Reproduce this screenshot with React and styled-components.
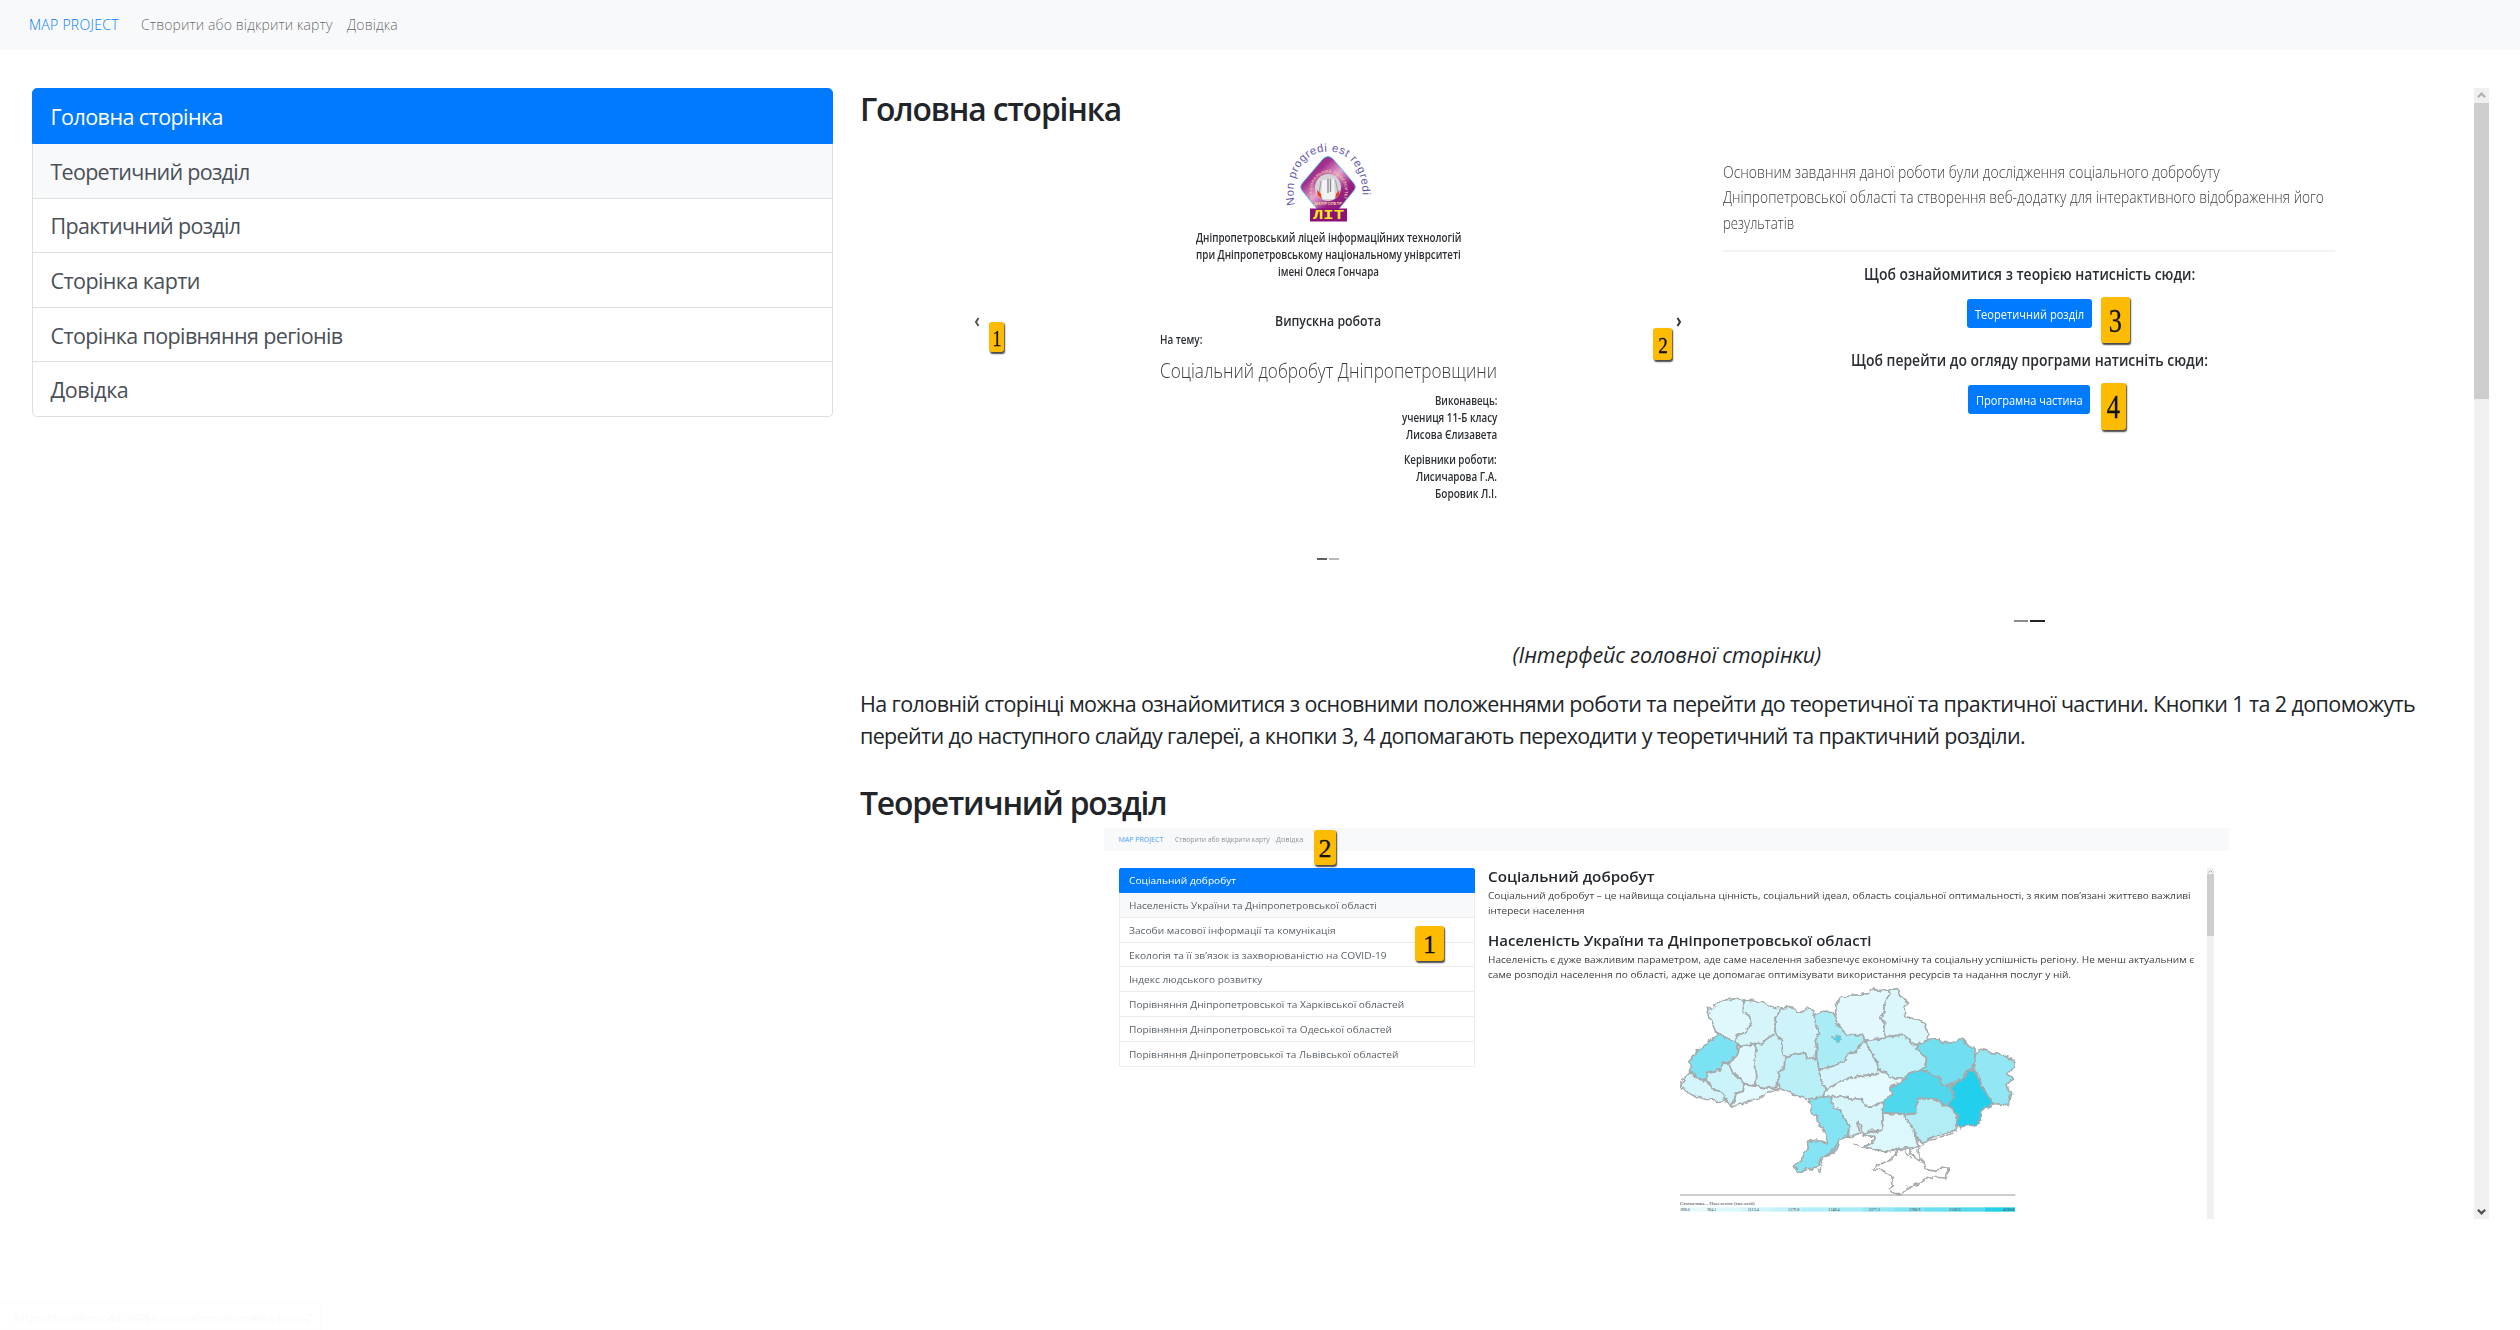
import React, { useLayoutEffect, useRef, useState } from "react";
import styled, { createGlobalStyle } from "styled-components";

const Global = createGlobalStyle`
  * { box-sizing: border-box; }
  html, body { margin: 0; padding: 0; background: #fff; overflow: hidden; }
  body { font-family: "Open Sans", "Noto Sans", sans-serif; color: #212529; }
  h2, h4, p, ul, figure { margin: 0; padding: 0; font-weight: inherit; }
`;

/* ---------- single line of text set to a given measure ---------- */

const LineBox = styled.span`
  display: block;
  flex: none;
  width: ${(p) => p.$w}px;
  height: ${(p) => p.$lh}px;
  line-height: ${(p) => p.$lh}px;
  font-size: ${(p) => p.$size}px;
  font-weight: ${(p) => p.$weight || 400};
  font-style: ${(p) => (p.$italic ? "italic" : "normal")};
  ${(p) => (p.$color ? `color: ${p.$color};` : "")}
  white-space: nowrap;
`;

const LineInk = styled.span`
  display: inline-block;
  transform-origin: 0 50%;
`;

function Line({ w, lh, size, weight, color, italic, stretch, children }) {
  const ink = useRef(null);
  const [fit, setFit] = useState(null);
  useLayoutEffect(() => {
    const natural = ink.current.offsetWidth;
    setFit(
      stretch
        ? { transform: `scaleX(${w / natural})` }
        : { letterSpacing: `${(w - natural) / children.length}px` }
    );
  }, []);
  return (
    <LineBox $w={w} $lh={lh} $size={size} $weight={weight} $color={color} $italic={italic}>
      <LineInk ref={ink} style={fit || undefined}>{children}</LineInk>
    </LineBox>
  );
}

/* ---------- page frame ---------- */

const Page = styled.div`
  width: 2520px;
  height: 1330px;
  display: flex;
  flex-direction: column;
  overflow: hidden;
  position: relative;
`;

const Navbar = styled.nav`
  flex: none;
  height: 50px;
  padding-left: 29px;
  display: flex;
  align-items: center;
  background: #f8f9fa;
`;

const Brand = styled.div`
  color: #007bff;
  margin-right: 22px;
`;

const NavLink = styled.div`
  color: rgba(0, 0, 0, 0.62);
  margin-right: 15px;
`;

const Columns = styled.main`
  display: flex;
  align-items: flex-start;
  padding: 38px 31px 0 32px;
`;

const Menu = styled.ul`
  width: 801px;
  flex: none;
  list-style: none;
`;

const MenuItem = styled.li`
  display: flex;
  align-items: center;
  height: ${(p) => (p.$active ? 56 : 54.6)}px;
  padding: 1px 0 0 17.5px;
  color: ${(p) => (p.$active ? "#fff" : "#495057")};
  background: ${(p) => (p.$active ? "#007bff" : p.$hover ? "#f8f9fa" : "#fff")};
  border: 1px solid ${(p) => (p.$active ? "#007bff" : "#dfdfdf")};
  border-top-width: ${(p) => (p.$active ? 1 : 0)}px;
  &:first-child { border-radius: 5px 5px 0 0; }
  &:last-child { border-radius: 0 0 5px 5px; }
`;

const Article = styled.section`
  width: 1615px;
  height: 1135px;
  margin: -4px 0 0 26px;
  padding-top: 5px;
  flex: none;
  overflow: hidden;
  display: flex;
  flex-direction: column;
`;

const Heading = styled.h2`
  flex: none;
  padding-left: 1px;
`;

const Caption = styled.p`
  flex: none;
  display: flex;
  justify-content: center;
  height: 50px;
`;

const Paragraph = styled.p`
  flex: none;
  padding-left: 1px;
  height: 95px;
`;

/* ---------- scrollbars ---------- */

const Bar = styled.div`
  flex: none;
  width: ${(p) => p.$w}px;
  height: ${(p) => p.$h}px;
  background: #f0f0f0;
  display: flex;
  flex-direction: column;
`;

const Thumb = styled.div`
  height: ${(p) => p.$h}px;
  background: #cdcdcd;
`;

const BarSpace = styled.div`
  flex: 1;
`;

const BarButton = styled.div`
  height: ${(p) => p.$h}px;
  display: flex;
  align-items: center;
  justify-content: center;
`;

const Chevron = ({ size, d, color, width = 2 }) => (
  <svg width={size} height={size} viewBox="0 0 10 10" fill="none">
    <path d={d} stroke={color} strokeWidth={width} />
  </svg>
);

/* ---------- carousel slides ---------- */

const Slides = styled.figure`
  && { padding-right: 3px; }
  flex: none;
  display: flex;
  justify-content: center;
  height: 509px;
`;

const Slide = styled.div`
  position: relative;
  flex: none;
  width: ${(p) => p.$w}px;
  display: flex;
  flex-direction: column;
  align-items: center;
  padding-top: ${(p) => p.$top}px;
  color: #2b2f33;
`;

const Control = styled.div`
  position: absolute;
  top: 188px;
  ${(p) => p.$side}: 8px;
  display: flex;
`;

const Stack = styled.div`
  flex: none;
  display: flex;
  flex-direction: column;
  align-items: ${(p) => p.$align || "center"};
  width: ${(p) => (p.$w ? `${p.$w}px` : "auto")};
  margin-top: ${(p) => p.$mt || 0}px;
`;

const Rule = styled.div`
  width: 612px;
  height: 2px;
  margin: 14px 0 10px;
  background: #f3f3f4;
`;

const SlideButton = styled.div`
  display: flex;
  justify-content: center;
  width: ${(p) => p.$w}px;
  height: 29px;
  margin: 13px 0 ${(p) => p.$mb || 0}px;
  padding-top: 5px;
  border-radius: 3px;
  background: #007bff;
  color: #fff;
`;

const Indicators = styled.div`
  display: flex;
  gap: 2px;
  margin-top: ${(p) => p.$mt}px;
`;

const Dash = styled.div`
  width: ${(p) => p.$w}px;
  height: 2px;
  background: ${(p) => p.$c};
`;

const Badge = styled.div`
  position: absolute;
  left: ${(p) => p.$x}px;
  top: ${(p) => p.$y}px;
  width: ${(p) => p.$w}px;
  height: ${(p) => p.$h}px;
  display: flex;
  align-items: center;
  justify-content: center;
  border-radius: 3px;
  background: #fdbb02;
  box-shadow: 1px 1.5px 1.5px rgba(40, 40, 40, 0.85);
  font-family: "Liberation Serif", serif;
  font-size: ${(p) => p.$size}px;
  line-height: 1;
  color: #111;
  & > span { transform: scaleX(${(p) => p.$sx || 1}); padding-top: 2px; -webkit-text-stroke: 0.3px #111; }
`;

/* ---------- embedded page preview ---------- */

const Preview = styled.figure`
  && { margin: 5px 0 0 245px; }
  position: relative;
  flex: none;
  width: 1125px;
  height: 391px;
  overflow: hidden;
`;

const PreviewNav = styled.div`
  height: 23px;
  display: flex;
  align-items: center;
  gap: 11px;
  padding-left: 14.5px;
  background: #f8f9fa;
  & > :nth-child(3) { margin-left: -5px; }
`;

const PreviewBody = styled.div`
  display: flex;
  padding: 17px 0 0 15px;
`;

const PreviewMenu = styled.ul`
  width: 356px;
  flex: none;
  list-style: none;
`;

const PreviewItem = styled.li`
  height: ${(p) => (p.$active ? 25 : 24.8)}px;
  padding: ${(p) => (p.$active ? 4 : 5)}px 0 0 8.5px;
  border: 1px solid ${(p) => (p.$active ? "#007bff" : "#ececec")};
  border-top-width: ${(p) => (p.$active ? 1 : 0)}px;
  color: ${(p) => (p.$active ? "#fff" : "#5b6268")};
  background: ${(p) => (p.$active ? "#007bff" : p.$hover ? "#f8f9fa" : "#fff")};
  &:first-child { border-radius: 2px 2px 0 0; }
  &:last-child { border-radius: 0 0 2px 2px; }
`;

const PreviewText = styled.div`
  width: 731.5px;
  flex: none;
  padding-left: 13px;
  color: #3a3f44;
`;

const PreviewPara = styled.p`
  && { padding: ${(p) => p.$pad}; }
`;

const MapBox = styled.div`
  margin-left: 192px;
  height: 236px;
  & > svg { display: block; }
`;

/* ---------- link status bubble ---------- */

const Status = styled.div`
  position: absolute;
  left: 0;
  bottom: 0;
  width: 321px;
  height: 27px;
  padding: 6px 0 0 14px;
  border: 1px solid #fcfcfc;
  border-left: 0;
  color: #fafafa;
`;

/* ---------- drawings ---------- */

const Emblem = () => (
  <svg width="100" height="82" viewBox="0 0 100 82" overflow="visible">
    <defs>
      <linearGradient id="gem" x1="0" y1="0" x2="1" y2="1">
        <stop offset="0" stopColor="#7d0f73" />
        <stop offset="0.3" stopColor="#a5318f" />
        <stop offset="0.5" stopColor="#e9a3cf" />
        <stop offset="0.7" stopColor="#9a2186" />
        <stop offset="1" stopColor="#7d0f73" />
      </linearGradient>
      <path id="motto" d="M17 63 C11 34 25 9.500 50 9.500 C75 9.500 89 34 83 66 L80 78" />
      <path id="ring" d="M35 55 A16.500 18 0 1 1 66 55 L64 62" />
    </defs>
    <text fontFamily="Liberation Sans, sans-serif" fontSize="11.300" fill="#6357ab">
      <textPath href="#motto" textLength="135">Non progredi est regredi</textPath>
    </text>
    <path
      d="M45 17 Q50 12 55 17 L75.500 41 Q79 45 75.500 49 L60 68 H40 L24.500 49 Q21 45 24.500 41 Z"
      fill="url(#gem)"
      stroke="#55b8e4"
      strokeWidth="1"
    />
    <text fontFamily="Liberation Sans, sans-serif" fontSize="4" fontWeight="700" fill="#e8c49a">
      <textPath href="#ring" textLength="68">НАЦІОНАЛЬНИЙ УНІВЕРСИТЕТ</textPath>
    </text>
    <text x="50" y="63" textAnchor="middle" textLength="28" fontFamily="Liberation Sans, sans-serif" fontSize="4" fontWeight="700" fill="#efd9a0">ДНІПРОПЕТР</text>
    <ellipse cx="50" cy="45.500" rx="13" ry="13.500" fill="#d4d4d6" />
    <path d="M44 38 L56 37 L57 57 H43 Z" fill="#f2f2f2" />
    <path d="M50 37 V51 M52.500 37 V50" stroke="#8d8d92" strokeWidth="1.400" />
    <path d="M43 39 L41 52 L44 57 M57.500 38 L60 51 L57 57" stroke="#8d8d92" strokeWidth="0.800" fill="none" />
    <path d="M39 48 L43 52 L43.500 57 L39.500 53 Z M61.500 48 L58 52 L57.500 56 L61 53 Z" fill="#e8401c" />
    <rect x="32" y="66.500" width="37" height="13" fill="#8c1179" />
    <text x="50.500" y="77" textAnchor="middle" textLength="31" lengthAdjust="spacingAndGlyphs" fontFamily="Liberation Mono, monospace" fontSize="13" fontWeight="700" fill="#f7ea1c">ЛІТ</text>
  </svg>
);

const regions = [
  ["#dff8fc", "M142 112L160 118 165 105 185 92 232 87 252 92 250 128 272 140 276 165 262 175 258 187 230 200 226 215 198 205 186 194 168 192 160 165 148 140Z"],
  ["#d5f5fa", "M252 92L290 93 320 103 345 113 368 115 360 128 346 150 345 180 348 192 320 208 305 222 285 222 245 230 232 228 226 215 230 200 258 187 262 175 276 165 272 140 250 128Z"],
  ["#cff3fa", "M368 115L395 112 410 125 430 128 445 113 458 120 462 135 468 165 476 190 466 215 470 232 466 262 470 268 440 265 438 250 405 255 375 260 367 250 365 215 348 192 345 180 346 150 360 128Z"],
  ["#aaecf6", "M462 135L485 126 515 124 526 140 528 160 545 178 560 195 585 195 606 195 615 212 600 228 590 248 565 252 558 272 535 283 510 293 480 300 470 268 470 232 466 215 476 190 468 165Z"],
  ["#e2f8fd", "M526 140L528 110 540 85 560 77 600 75 625 72 632 57 660 63 686 60 690 75 672 100 672 125 662 145 675 160 675 202 665 208 615 212 606 195 585 195 560 195 545 178 528 160Z"],
  ["#dcf7fc", "M686 60L715 57 722 80 745 100 732 115 738 140 765 148 795 158 805 195 805 210 775 225 755 225 738 198 710 198 675 202 675 160 662 145 672 125 672 100 690 75Z"],
  ["#c6f2f9", "M615 212L665 208 675 202 710 198 738 198 755 225 775 225 770 240 800 265 795 290 775 303 745 310 735 328 705 328 675 308 652 298 650 275 630 240Z"],
  ["#72dff0", "M775 225L805 210 835 207 850 218 880 220 908 207 925 228 942 240 945 262 940 300 920 305 910 330 885 335 875 345 858 350 845 345 835 322 815 318 805 305 775 303 795 290 800 265 770 240Z"],
  ["#93e7f4", "M945 262L958 235 985 243 1000 253 1020 252 1040 265 1063 270 1060 295 1042 315 1058 328 1040 345 1052 370 1045 405 1000 402 990 385 965 355 958 325 940 300Z"],
  ["#22cfec", "M940 300L958 325 965 355 990 385 1000 402 985 412 962 425 960 450 952 467 915 468 900 478 888 460 895 440 880 425 868 405 868 395 882 380 878 345 885 335 910 330 920 305Z"],
  ["#4dd8ee", "M735 328L745 310 775 303 805 305 815 318 835 322 845 345 858 350 875 345 882 380 868 395 865 405 842 405 830 388 775 385 770 432 735 432 700 432 668 428 672 395 695 375 692 352Z"],
  ["#b2edf6", "M772 388L830 388 842 405 865 405 880 425 895 440 888 460 890 480 850 493 820 500 792 520 770 510 762 478 738 450 738 435 770 432Z"],
  ["#d3f5fb", "M480 300L510 293 535 283 558 272 565 252 590 248 600 228 615 212 630 240 650 275 655 300 650 315 605 318 575 325 545 335 525 345 500 358 490 345 480 325Z"],
  ["#e5fafd", "M488 378L500 358 525 345 545 335 575 325 605 318 650 315 655 300 675 308 705 328 735 328 692 352 695 375 672 395 635 410 615 408 605 390 570 385 550 382 515 380Z"],
  ["#d6f6fb", "M512 382L550 382 570 385 605 390 615 408 635 410 668 395 668 428 670 455 665 482 630 485 608 492 600 462 592 455 600 490 580 500 565 500 568 465 548 440 540 422 520 415Z"],
  ["#85e4f3", "M445 388L490 382 512 382 520 415 540 422 548 440 568 465 562 500 540 508 535 530 510 557 482 565 475 590 450 598 415 607 400 590 425 570 430 550 445 535 442 515 470 512 505 520 495 490 478 465 472 440 458 432 452 405Z"],
  ["#dcf8fd", "M668 430L735 435 738 450 762 478 765 505 778 530 750 535 720 535 690 545 645 540 612 530 640 515 645 500 615 498 608 492 665 482 670 455Z"],
  ["#b9f0f8", "M375 262L405 255 438 250 440 265 470 268 480 300 480 325 490 345 497 362 485 382 445 388 410 378 375 362 357 355 355 310 372 295Z"],
  ["#cdf3fa", "M288 222L305 222 320 208 348 192 365 215 367 250 375 262 372 295 355 310 352 350 320 355 288 348 290 320 285 280Z"],
  ["#def8fd", "M238 235L245 230 288 222 285 280 290 320 287 348 250 340 235 320 215 305 208 285 220 265 240 245Z"],
  ["#7ae2f2", "M178 195L186 194 198 205 226 215 230 232 240 245 220 265 205 280 188 280 185 300 145 308 138 335 110 325 92 305 90 275 110 245 145 215Z"],
  ["#d3f5fb", "M92 308L110 325 138 335 160 350 165 360 192 372 200 395 175 395 130 388 95 375 80 365 62 350 68 335 80 315Z"],
  ["#cbf3fa", "M145 308L185 300 188 280 205 282 215 305 235 320 252 345 250 365 225 372 215 410 200 395 192 372 165 360 138 335Z"],
  ["#e5fafd", "M225 372L250 365 252 345 288 350 320 355 357 358 320 370 295 388 250 400 215 413Z"],
  ["#fff", "M637 598L650 585 680 578 705 558 712 540 745 535 755 560 785 575 800 600 830 605 840 592 868 595 858 625 810 622 780 640 745 655 725 672 700 672 688 658 700 648 695 620 665 600Z"],
  ["#4fcfe8", "M514 200L528 203 540 196 543 208 533 220 524 212Z"],
];

const steps = ["#e5fafd", "#dcf8fc", "#cff4fa", "#c2f1f9", "#b4eef7", "#a6ebf6", "#93e7f4", "#80e3f2", "#6bdef0", "#52d9ee", "#22cfec"];
const marks = [[62, "898.0"], [142, "984.1"], [263, "1113.4"], [384, "1179.8"], [505, "1248.4"], [626, "1377.3"], [747, "1788.9"], [868, "2502.3"], [1030, "4330.8"]];

const UkraineMap = () => (
  <svg width="337" height="236" viewBox="60 40 1011 708">
    <defs>
      <filter id="coast" x="-5%" y="-5%" width="110%" height="110%">
        <feTurbulence type="fractalNoise" baseFrequency="0.06" numOctaves="2" seed="4" result="n" />
        <feDisplacementMap in="SourceGraphic" in2="n" scale="16" xChannelSelector="R" yChannelSelector="G" />
      </filter>
    </defs>
    <g filter="url(#coast)" stroke="#a6aaab" strokeWidth="5" strokeLinejoin="round">
      {regions.map(([fill, d], i) => (
        <path key={i} d={d} fill={fill} strokeWidth={i === regions.length - 1 ? 2 : 5} />
      ))}
      <path d="M540 508L510 550 485 570 480 610 472 600 M580 522L612 535 690 547 M770 540L790 580 805 604 M735 545L750 565 M770 540L800 515 880 490" fill="none" strokeWidth="4" />
    </g>
    <path d="M60 676H1066" stroke="#9a9a9a" strokeWidth="3" />
    <text x="60" y="707" fontFamily="Liberation Serif, serif" fontSize="15" fill="#333" textLength="224">Статистика – Населення (тис.осіб)</text>
    {steps.map((c, i) => (
      <rect key={c} x={60 + i * 91.4} y="713" width="91.600" height="13" fill={c} />
    ))}
    {marks.map(([x, t]) => (
      <text key={t} x={x} y="724" fontFamily="Liberation Serif, serif" fontSize="10" fill="#444" textLength={x < 200 ? 27 : 34} lengthAdjust="spacingAndGlyphs">{t}</text>
    ))}
  </svg>
);

/* ---------- content ---------- */

const menu = [
  ["Головна сторінка", 172],
  ["Теоретичний розділ", 199],
  ["Практичний розділ", 190],
  ["Сторінка карти", 149],
  ["Сторінка порівняння регіонів", 292],
  ["Довідка", 78],
];

const previewMenu = [
  ["Соціальний добробут", 107],
  ["Населеність України та Дніпропетровської області", 248],
  ["Засоби масової інформації та комунікація", 207],
  ["Екологія та її зв’язок із захворюваністю на COVID-19", 258],
  ["Індекс людського розвитку", 133],
  ["Порівняння Дніпропетровської та Харківської областей", 275],
  ["Порівняння Дніпропетровської та Одеської областей", 263],
  ["Порівняння Дніпропетровської та Львівської областей", 269],
];

const Small = (props) => <Line lh={17} size={11.7} weight={600} stretch {...props} />;
const PText = (props) => <Line lh={14.7} size={9.8} stretch {...props} />;

function TitleSlide() {
  return (
    <Slide $w={728} $top={13}>
      <Emblem />
      <Stack $mt={4.5}>
        <Small w={265}>Дніпропетровський ліцей інформаційних технологій</Small>
        <Small w={265}>при Дніпропетровському національному уніврситеті</Small>
        <Small w={101}>імені Олеся Гончара</Small>
      </Stack>
      <Stack $mt={31}>
        <Line w={106} lh={20} size={14.2} weight={600} stretch>Випускна робота</Line>
      </Stack>
      <Stack $w={337} $align="flex-start">
        <Line w={42} lh={17} size={11.8} weight={600} stretch>На тему:</Line>
      </Stack>
      <Stack $w={337} $mt={8} $align="flex-start">
        <Line w={337} lh={28} size={20.5} weight={300} color="#3c3c3c" stretch>Соціальний добробут Дніпропетровщини</Line>
      </Stack>
      <Stack $w={337} $mt={8} $align="flex-end">
        <Small w={62}>Виконавець:</Small>
        <Small w={95}>учениця 11-Б класу</Small>
        <Small w={91}>Лисова Єлизавета</Small>
      </Stack>
      <Stack $w={337} $mt={8} $align="flex-end">
        <Small w={93}>Керівники роботи:</Small>
        <Small w={81}>Лисичарова Г.А.</Small>
        <Small w={62}>Боровик Л.І.</Small>
      </Stack>
      <Indicators $mt={56}>
        <Dash $w={10} $c="#5f5f5f" />
        <Dash $w={10} $c="#b9b9b9" />
      </Indicators>
      <Control $side="left"><Chevron size={10} d="M6.500 1L4 5 6.500 9" color="#555" /></Control>
      <Control $side="right"><Chevron size={10} d="M3.500 1L6 5 3.500 9" color="#333" /></Control>
      <Badge $x={25} $y={193} $w={15} $h={30} $size={24} $sx={0.75}><span>1</span></Badge>
      <Badge $x={689} $y={199} $w={19} $h={32} $size={24} $sx={0.8}><span>2</span></Badge>
    </Slide>
  );
}

function LinksSlide() {
  return (
    <Slide $w={674} $top={31}>
      <Stack $w={612} $align="flex-start">
        <Line w={497} lh={25.3} size={16} weight={300} color="#3c3c3c" stretch>Основним завдання даної роботи були дослідження соціального добробуту</Line>
        <Line w={601} lh={25.3} size={16} weight={300} color="#3c3c3c" stretch>Дніпропетровської області та створення веб-додатку для інтерактивного відображення його</Line>
        <Line w={71} lh={25.3} size={16} weight={300} color="#3c3c3c" stretch>результатів</Line>
      </Stack>
      <Rule />
      <Line w={331} lh={24} size={15.8} weight={600} stretch>Щоб ознайомитися з теорією натисність сюди:</Line>
      <SlideButton $w={125} $mb={20}>
        <Line w={109} lh={20} size={12.8} stretch>Теоретичний розділ</Line>
      </SlideButton>
      <Line w={357} lh={24} size={15.8} weight={600} stretch>Щоб перейти до огляду програми натисніть сюди:</Line>
      <SlideButton $w={122}>
        <Line w={107} lh={20} size={12.8} stretch>Програмна частина</Line>
      </SlideButton>
      <Indicators $mt={206}>
        <Dash $w={14} $c="#8c8c8c" />
        <Dash $w={15} $c="#222" />
      </Indicators>
      <Badge $x={409} $y={168} $w={29} $h={46} $size={33} $sx={0.8}><span>3</span></Badge>
      <Badge $x={409} $y={254} $w={25} $h={47} $size={33} $sx={0.8}><span>4</span></Badge>
    </Slide>
  );
}

function TheoryPreview() {
  return (
    <Preview>
      <PreviewNav>
        <Line w={45} lh={16} size={7} color="#4a9ff5" stretch>MAP PROJECT</Line>
        <Line w={95} lh={16} size={7} color="#929292" stretch>Створити або відкрити карту</Line>
        <Line w={27} lh={16} size={7} color="#929292" stretch>Довідка</Line>
      </PreviewNav>
      <PreviewBody>
        <PreviewMenu>
          {previewMenu.map(([t, w], i) => (
            <PreviewItem key={t} $active={i === 0} $hover={i === 1}>
              <Line w={w} lh={15} size={9.6} stretch>{t}</Line>
            </PreviewItem>
          ))}
        </PreviewMenu>
        <PreviewText>
          <Line w={166} lh={18} size={14} weight={600} color="#25292d" stretch>Соціальний добробут</Line>
          <PreviewPara $pad="3px 0 14px">
            <PText w={703}>Соціальний добробут – це найвища соціальна цінність, соціальний ідеал, область соціальної оптимальності, з яким пов’язані життєво важливі</PText>
            <PText w={97}>інтереси населення</PText>
          </PreviewPara>
          <Line w={383} lh={18} size={14} weight={600} color="#25292d" stretch>Населеність України та Дніпропетровської області</Line>
          <PreviewPara $pad="3px 0 0">
            <PText w={706}>Населеність є дуже важливим параметром, аде саме населення забезпечує економічну та соціальну успішність регіону. Не менш актуальним є</PText>
            <PText w={583}>саме розподіл населення по області, адже це допомагає оптимізувати використання ресурсів та надання послуг у ній.</PText>
          </PreviewPara>
          <MapBox><UkraineMap /></MapBox>
        </PreviewText>
        <Bar $w={7} $h={351}>
          <BarButton $h={6}><Chevron size={5} d="M1 7L5 3 9 7" color="#aaa" /></BarButton>
          <Thumb $h={62} />
        </Bar>
      </PreviewBody>
      <Badge $x={210} $y={2} $w={22} $h={35} $size={26}><span>2</span></Badge>
      <Badge $x={311} $y={98} $w={29} $h={35} $size={26}><span>1</span></Badge>
    </Preview>
  );
}

export default function App() {
  return (
    <Page>
      <Global />
      <Navbar>
        <Brand><Line w={90} lh={22} size={14} weight={350}>MAP PROJECT</Line></Brand>
        <NavLink><Line w={191} lh={22} size={14} weight={350}>Створити або відкрити карту</Line></NavLink>
        <NavLink><Line w={51} lh={22} size={14} weight={350}>Довідка</Line></NavLink>
      </Navbar>
      <Columns>
        <Menu>
          {menu.map(([t, w], i) => (
            <MenuItem key={t} $active={i === 0} $hover={i === 1}>
              <Line w={w} lh={33} size={21.5}>{t}</Line>
            </MenuItem>
          ))}
        </Menu>
        <Article>
          <Heading><Line w={261} lh={40} size={31.8} weight={600}>Головна сторінка</Line></Heading>
          <Slides>
            <TitleSlide />
            <LinksSlide />
          </Slides>
          <Caption><Line w={308} lh={33} size={21.5} italic>(Інтерфейс головної сторінки)</Line></Caption>
          <Paragraph>
            <Line w={1555} lh={32.2} size={21.5}>На головній сторінці можна ознайомитися з основними положеннями роботи та перейти до теоретичної та практичної частини. Кнопки 1 та 2 допоможуть</Line>
            <Line w={1165} lh={32.2} size={21.5}>перейти до наступного слайду галереї, а кнопки 3, 4 допомагають переходити у теоретичний та практичний розділи.</Line>
          </Paragraph>
          <Heading><Line w={306} lh={40} size={31.8} weight={600}>Теоретичний розділ</Line></Heading>
          <TheoryPreview />
        </Article>
        <Bar $w={15} $h={1131}>
          <BarButton $h={15}><Chevron size={9} d="M1 7L5 3 9 7" color="#b3b3b3" width={2.5} /></BarButton>
          <Thumb $h={296} />
          <BarSpace />
          <BarButton $h={15}><Chevron size={9} d="M1 3L5 7 9 3" color="#505050" width={2.5} /></BarButton>
        </Bar>
      </Columns>
      <Status><Line w={299} lh={17} size={12.5}>https://localhost:44399/Home/Information#list-item-2</Line></Status>
    </Page>
  );
}
